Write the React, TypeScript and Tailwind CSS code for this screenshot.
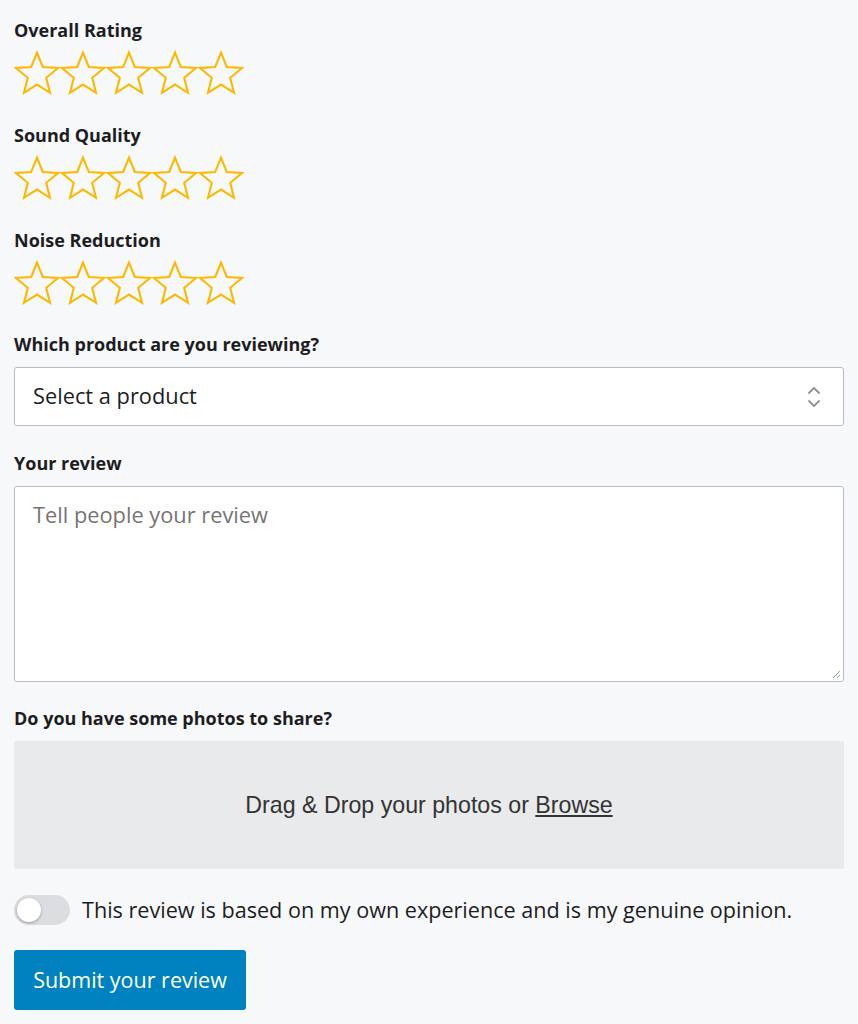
import React from 'react'

const font = { fontFamily: '"Open Sans", Lato, sans-serif' }

const Star = () => (
  <svg width="46" height="46" viewBox="0.5 0.5 23 23" fill="none" stroke="#ffb800" strokeWidth="1.05" strokeLinejoin="miter">
    <path d="M12 1.8l2.9 7.2 7.6.5-5.9 4.9 1.9 7.5L12 17.8l-6.5 4.1 1.9-7.5-5.9-4.9 7.6-.5z" />
  </svg>
)

const Rating = ({ label }: { label: string }) => (
  <div className="flex flex-col">
    <div className="text-[18px] font-bold text-[#1d1d1f] leading-[22px]">{label}</div>
    <div className="flex mt-[9px]">
      {[0, 1, 2, 3, 4].map((i) => (
        <Star key={i} />
      ))}
    </div>
  </div>
)

const App = () => {
  return (
    <div className="min-h-screen bg-[#f7f8fa] pl-[14px] pr-[14px] pt-[19px] text-[#1d1d1f]" style={font}>
      {/* Ratings */}
      <div className="flex flex-col gap-[28px]">
        <Rating label="Overall Rating" />
        <Rating label="Sound Quality" />
        <Rating label="Noise Reduction" />
      </div>

      {/* Product select */}
      <div className="mt-[27px] text-[18px] font-bold leading-[22px]">Which product are you reviewing?</div>
      <div className="mt-[12px] h-[59px] bg-white border border-[#b8bcc6] rounded-[3px] flex items-center justify-between pl-[18px] pr-[22px]">
        <span className="text-[21.8px]">Select a product</span>
        <svg width="14" height="24" viewBox="0 0 14 24" fill="none" stroke="#8c929e" strokeWidth="1.8" strokeLinecap="round" strokeLinejoin="round">
          <path d="M2 8l5-5 5 5" />
          <path d="M2 16l5 5 5-5" />
        </svg>
      </div>

      {/* Review */}
      <div className="mt-[26px] text-[18px] font-bold leading-[22px]">Your review</div>
      <div className="mt-[12px] h-[196px] bg-white border border-[#b8bcc6] rounded-[3px] relative px-[18px] pt-[12px]">
        <span className="text-[21.8px] text-[#757575]">Tell people your review</span>
        <svg className="absolute right-[2px] bottom-[2px]" width="10" height="10" viewBox="0 0 10 10" stroke="#9a9a9a" strokeWidth="1">
          <path d="M9 2L2 9M9 6L6 9" />
        </svg>
      </div>

      {/* Photos */}
      <div className="mt-[25px] text-[18px] font-bold leading-[22px]">Do you have some photos to share?</div>
      <div className="mt-[12px] h-[128px] bg-[#e9eaec] rounded-[2px] flex items-center justify-center">
        <span className="text-[23.2px] text-[#333]" style={{ fontFamily: '"Liberation Sans", Arial, sans-serif' }}>
          Drag &amp; Drop your photos or <span className="underline">Browse</span>
        </span>
      </div>

      {/* Toggle */}
      <div className="mt-[26px] h-[30px] flex items-center gap-[12px]">
        <div className="w-[56px] h-[30px] rounded-full bg-[#dcdde0] relative">
          <div className="absolute left-[3px] top-[3px] w-[24px] h-[24px] rounded-full bg-white shadow-[0_1px_3px_rgba(0,0,0,0.3)]" />
        </div>
        <span className="text-[21.6px] leading-[30px]">This review is based on my own experience and is my genuine opinion.</span>
      </div>

      {/* Submit */}
      <button className="mt-[25px] h-[60px] w-[232px] bg-[#0081c0] text-white text-[21.5px] rounded-[3px]">
        Submit your review
      </button>
    </div>
  )
}

export default App
